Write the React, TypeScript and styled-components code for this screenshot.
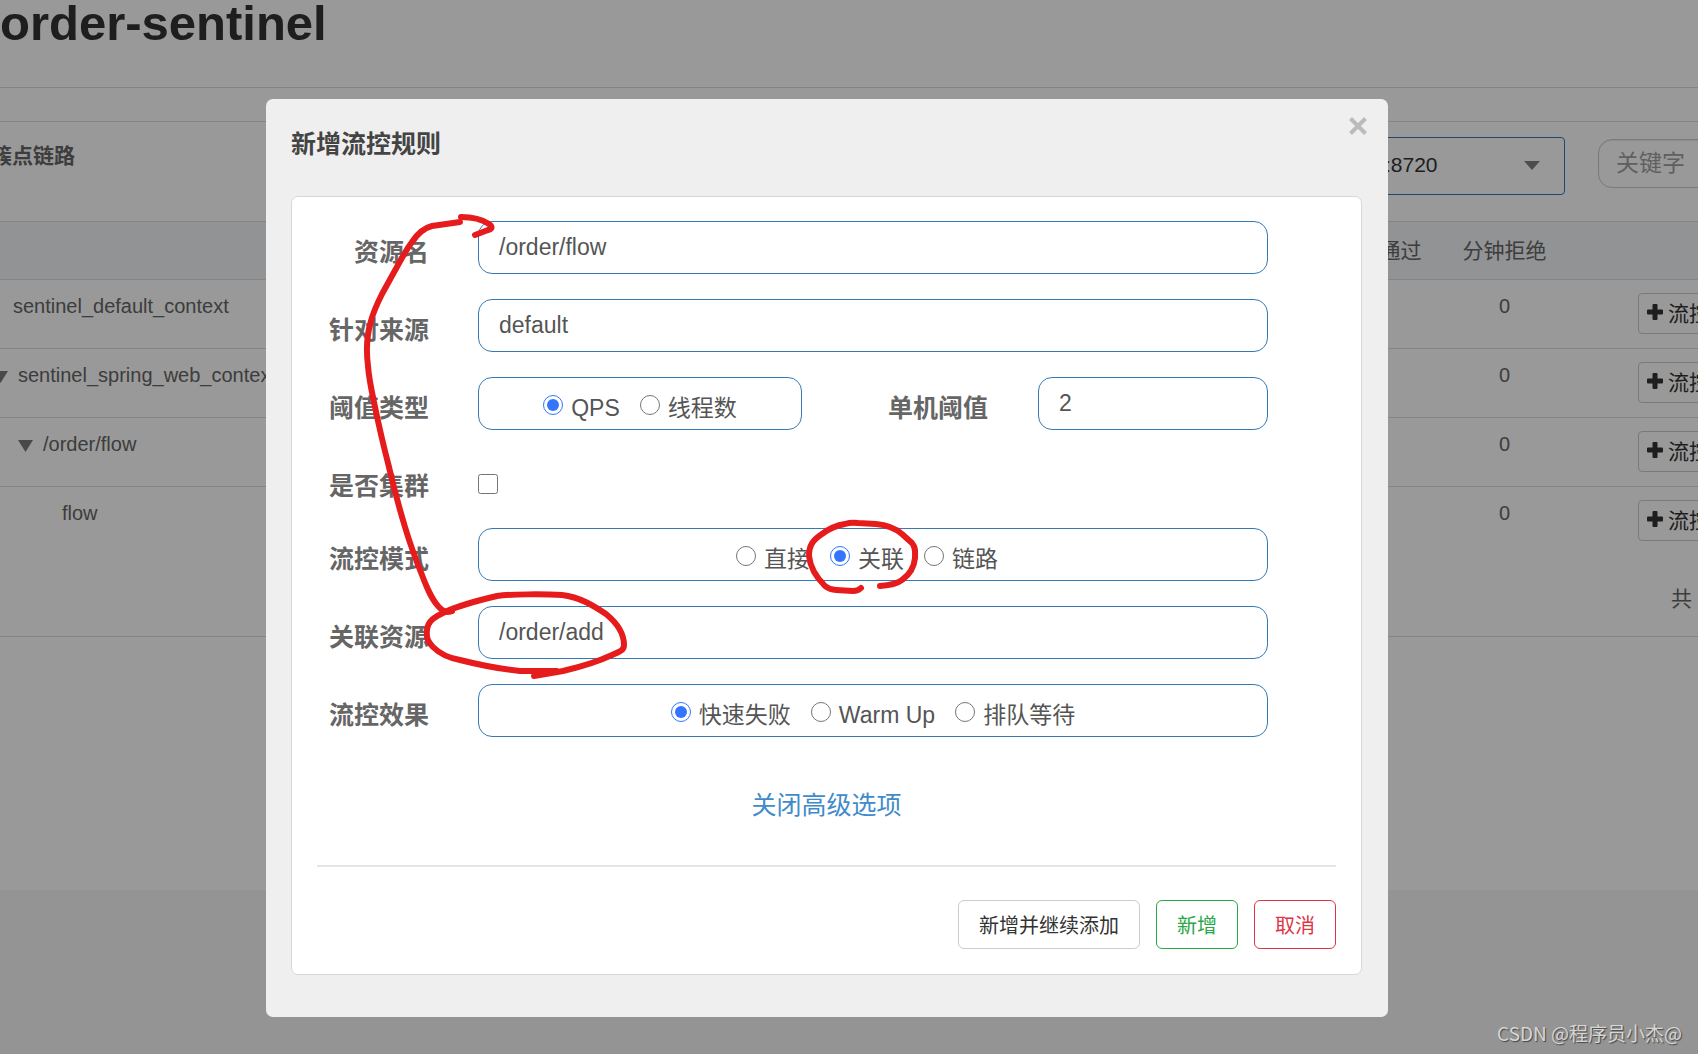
import React, { useState } from "react";
import styled, { createGlobalStyle } from "styled-components";

const SANS = `"Liberation Sans", Arial, "Noto Sans CJK SC", sans-serif`;

const GlobalStyle = createGlobalStyle`
  *, *::before, *::after { box-sizing: border-box; }
  body { margin: 0; background: #f7f7f7; font-family: ${SANS}; }
  button, input, select { font-family: inherit; margin: 0; }
`;

const Screen = styled.div`
  position: relative;
  min-height: 100vh;
  overflow: hidden;
`;

/* ---------- dashboard behind the dialog ---------- */

const Page = styled.main`
  margin: 0 -160px 0 -24px;
  padding-bottom: 253px;
  background: #fff;
  color: #666;
  font-size: 20px;
`;

const PageHeader = styled.header`
  height: 88px;
  padding-left: 24px;
  border-bottom: 1px solid #ddd;
`;

const PageTitle = styled.h1`
  margin: 0;
  color: #333;
  font-size: 49px;
  line-height: 46px;
`;

const Panel = styled.section`
  margin-top: 33px;
  border-top: 1px solid #ddd;
  border-bottom: 1px solid #ddd;
`;

const Toolbar = styled.div`
  display: flex;
  height: 99px;
  padding: 15px 20px 0 15px;
`;

const ToolbarTitle = styled.h2`
  flex: 1;
  margin: 0;
  font-size: 21px;
  line-height: 38px;
`;

const SelectWrap = styled.div`
  position: relative;
  width: 205px;
  height: 58px;
  margin-right: 33px;
`;

const MachineSelect = styled.select`
  appearance: none;
  width: 100%;
  height: 100%;
  padding: 0 24px 4px;
  border: 1px solid #337ab7;
  border-radius: 4px;
  background: #fff;
  color: #333;
  font-size: 21px;
`;

const SelectArrow = styled.svg`
  position: absolute;
  top: 24px;
  right: 25px;
  pointer-events: none;
`;

const KeywordInput = styled.input`
  width: 240px;
  height: 49px;
  margin-top: 2px;
  padding: 0 17px;
  border: 1px solid #ccc;
  border-radius: 14px;
  background: #fff;
  box-shadow: inset 0 1px 1px rgba(0, 0, 0, 0.08);
  font-size: 23px;
  &::placeholder { color: #a0a0a0; }
`;

const Table = styled.table`
  width: 100%;
  table-layout: fixed;
  border-spacing: 0;
`;

const Col = styled.col<{ $width?: number }>`
  width: ${(p) => (p.$width ? `${p.$width}px` : "auto")};
`;

const HeadCell = styled.th`
  height: 58px;
  padding: 0 0 4px;
  border-top: 1px solid #ddd;
  background: #f3f5f7;
  font-size: 21px;
  font-weight: 400;
`;

const Cell = styled.td<{ $center?: boolean }>`
  height: 69px;
  padding: 13px 0 0;
  border-top: 1px solid #ddd;
  line-height: 26px;
  vertical-align: top;
  text-align: ${(p) => (p.$center ? "center" : "left")};
`;

const ActionCell = styled(Cell)`
  padding-left: 71px;
`;

const NodeName = styled.div<{ $indent: number }>`
  display: flex;
  align-items: center;
  gap: 10px;
  padding-left: ${(p) => p.$indent}px;
`;

const CaretIcon = styled.svg`
  margin-top: 4px;
`;

const FlowButton = styled.button`
  display: flex;
  align-items: center;
  gap: 5px;
  height: 41px;
  padding: 0 8px 4px;
  border: 1px solid #ccc;
  border-radius: 4px;
  background: #fff;
  color: #333;
  font-size: 21px;
`;

const Footer = styled.footer`
  display: flex;
  justify-content: flex-end;
  height: 81px;
  padding-top: 29px;
  font-size: 21px;
  line-height: 30px;
`;

const Total = styled.span`
  width: 187px;
`;

/* ---------- dialog ---------- */

const Backdrop = styled.div`
  position: absolute;
  inset: 0;
  padding: 99px 310px 37px 266px;
  background: rgba(0, 0, 0, 0.4);
`;

const Dialog = styled.section`
  position: relative;
  padding: 28px 26px 42px 25px;
  border-radius: 7px;
  background: #efefef;
  color: #555;
`;

const DialogTitle = styled.h4`
  margin: 0 0 34px;
  color: #444;
  font-size: 25px;
  line-height: 35px;
`;

const CloseButton = styled.button`
  position: absolute;
  top: 17px;
  right: 20px;
  display: flex;
  padding: 0;
  border: 0;
  background: none;
`;

const Card = styled.form`
  padding: 24px 25px 25px;
  border: 1px solid #d8d8d8;
  border-radius: 7px;
  background: #fff;
`;

const Fields = styled.div`
  display: grid;
  gap: 25px;
  padding-right: 68px;
`;

const Field = styled.div<{ $short?: boolean }>`
  display: grid;
  grid-template-columns: 112px 1fr;
  column-gap: 49px;
  height: ${(p) => (p.$short ? 48 : 53)}px;
`;

const Label = styled.label`
  padding-top: 14px;
  color: #666;
  font-size: 25px;
  font-weight: 700;
  line-height: 34px;
  text-align: right;
  white-space: nowrap;
`;

const TextInput = styled.input`
  width: 100%;
  height: 53px;
  padding: 0 20px;
  border: 1px solid #337ab7;
  border-radius: 14px;
  background: #fff;
  color: #555;
  font-size: 23px;
`;

const Split = styled.div`
  display: grid;
  grid-template-columns: 41% 1fr 230px;
`;

const SplitLabel = styled(Label)`
  padding-right: 50px;
`;

const RadioBox = styled.div<{ $trail?: boolean }>`
  display: flex;
  justify-content: center;
  gap: 20px;
  height: 53px;
  padding: 13px ${(p) => (p.$trail ? 12 : 0)}px 0 0;
  border: 1px solid #337ab7;
  border-radius: 14px;
`;

const Option = styled.label`
  display: flex;
  align-items: flex-start;
  gap: 8px;
  font-size: 23px;
  line-height: 34px;
  white-space: nowrap;
`;

const Radio = styled.input`
  width: 20px;
  height: 20px;
  margin-top: 4px;
  accent-color: #3375ff;
`;

const Checkbox = styled.input`
  width: 20px;
  height: 20px;
  margin-top: 19px;
`;

const Advanced = styled.div`
  margin-top: 50px;
  text-align: center;
`;

const AdvancedLink = styled.a`
  display: inline-block;
  color: #428bca;
  font-size: 25px;
  line-height: 36px;
  text-decoration: none;
`;

const Divider = styled.hr`
  height: 2px;
  margin: 42px 0 33px;
  border: 0;
  background: #e5e5e5;
`;

const Actions = styled.div`
  display: flex;
  justify-content: flex-end;
  gap: 16px;
`;

const ActionButton = styled.button<{ $color: string; $border: string }>`
  height: 49px;
  padding: 0 20px;
  border: 1px solid ${(p) => p.$border};
  border-radius: 6px;
  background: #fff;
  color: ${(p) => p.$color};
  font-size: 20px;
`;

const Ink = styled.svg`
  position: absolute;
  top: 0;
  left: 0;
  width: 1122px;
  height: 918px;
  pointer-events: none;
`;

const Watermark = styled.div`
  position: absolute;
  right: 16px;
  bottom: 7px;
  color: #d6d6d6;
  font-family: "Noto Sans CJK SC", sans-serif;
  font-size: 19px;
  line-height: 28px;
  text-shadow: 1px 1px 1px #444;
`;

type Node = { name: string; indent: number; open?: boolean };

const nodes: Node[] = [
  { name: "sentinel_default_context", indent: 37 },
  { name: "sentinel_spring_web_context", indent: 17, open: true },
  { name: "/order/flow", indent: 42, open: true },
  { name: "flow", indent: 86 },
];

function Caret() {
  return (
    <CaretIcon width="15" height="12" viewBox="0 0 15 12" aria-hidden="true">
      <path d="M0 0H15L7.5 12Z" fill="#7a7a7a" />
    </CaretIcon>
  );
}

function PlusIcon() {
  return (
    <svg width="16" height="16" viewBox="0 0 16 16" aria-hidden="true">
      <path
        d="M6.500 0H9.500Q10.500 0 10.500 1V5.500H15Q16 5.500 16 6.500V9.500Q16 10.500 15 10.500H10.500V15Q10.500 16 9.500 16H6.500Q5.500 16 5.500 15V10.500H1Q0 10.500 0 9.500V6.500Q0 5.500 1 5.500H5.500V1Q5.500 0 6.500 0Z"
        fill="#333"
      />
    </svg>
  );
}

type RadiosProps = { name: string; options: string[]; initial: string; trail?: boolean };

function Radios({ name, options, initial, trail }: RadiosProps) {
  const [value, setValue] = useState(initial);
  return (
    <RadioBox role="radiogroup" aria-labelledby={`${name}-label`} $trail={trail}>
      {options.map((option) => (
        <Option key={option}>
          <Radio
            type="radio"
            name={name}
            checked={value === option}
            onChange={() => setValue(option)}
          />
          {option}
        </Option>
      ))}
    </RadioBox>
  );
}

export default function App() {
  return (
    <Screen>
      <GlobalStyle />
      <Page>
        <PageHeader>
          <PageTitle>order-sentinel</PageTitle>
        </PageHeader>
        <Panel>
          <Toolbar>
            <ToolbarTitle>簇点链路</ToolbarTitle>
            <SelectWrap>
              <MachineSelect aria-label="机器">
                <option>:8720</option>
              </MachineSelect>
              <SelectArrow width="16" height="9" viewBox="0 0 16 9" aria-hidden="true">
                <path d="M0 0H16L8 9Z" fill="#808080" />
              </SelectArrow>
            </SelectWrap>
            <KeywordInput placeholder="关键字" aria-label="关键字" />
          </Toolbar>
          <Table>
            <colgroup>
              <Col />
              <Col $width={125} />
              <Col $width={125} />
              <Col $width={291} />
            </colgroup>
            <thead>
              <tr>
                <HeadCell />
                <HeadCell>分钟通过</HeadCell>
                <HeadCell>分钟拒绝</HeadCell>
                <HeadCell />
              </tr>
            </thead>
            <tbody>
              {nodes.map((node) => (
                <tr key={node.name}>
                  <Cell>
                    <NodeName $indent={node.indent}>
                      {node.open && <Caret />}
                      {node.name}
                    </NodeName>
                  </Cell>
                  <Cell />
                  <Cell $center>0</Cell>
                  <ActionCell>
                    <FlowButton type="button">
                      <PlusIcon />
                      流控
                    </FlowButton>
                  </ActionCell>
                </tr>
              ))}
            </tbody>
          </Table>
          <Footer>
            <Total>共 4</Total>
          </Footer>
        </Panel>
      </Page>

      <Backdrop>
        <Dialog role="dialog" aria-labelledby="dialog-title">
          <DialogTitle id="dialog-title">新增流控规则</DialogTitle>
          <CloseButton type="button" aria-label="关闭">
            <svg width="20" height="20" viewBox="0 0 20 20" aria-hidden="true">
              <path d="M2.5 2.5L17.5 17.5M17.5 2.5L2.5 17.5" stroke="#bbb" strokeWidth="4" />
            </svg>
          </CloseButton>
          <Card onSubmit={(e) => e.preventDefault()}>
            <Fields>
              <Field>
                <Label htmlFor="resource">资源名</Label>
                <TextInput id="resource" defaultValue="/order/flow" />
              </Field>
              <Field>
                <Label htmlFor="origin">针对来源</Label>
                <TextInput id="origin" defaultValue="default" />
              </Field>
              <Field>
                <Label as="span" id="grade-label">阈值类型</Label>
                <Split>
                  <Radios name="grade" options={["QPS", "线程数"]} initial="QPS" />
                  <SplitLabel htmlFor="count">单机阈值</SplitLabel>
                  <TextInput id="count" defaultValue="2" />
                </Split>
              </Field>
              <Field $short>
                <Label htmlFor="cluster">是否集群</Label>
                <Checkbox id="cluster" type="checkbox" />
              </Field>
              <Field>
                <Label as="span" id="strategy-label">流控模式</Label>
                <Radios name="strategy" options={["直接", "关联", "链路"]} initial="关联" trail />
              </Field>
              <Field>
                <Label htmlFor="ref">关联资源</Label>
                <TextInput id="ref" defaultValue="/order/add" />
              </Field>
              <Field>
                <Label as="span" id="behavior-label">流控效果</Label>
                <Radios name="behavior" options={["快速失败", "Warm Up", "排队等待"]} initial="快速失败" />
              </Field>
            </Fields>
            <Advanced>
              <AdvancedLink href="#">关闭高级选项</AdvancedLink>
            </Advanced>
            <Divider />
            <Actions>
              <ActionButton type="button" $color="#333" $border="#ccc">新增并继续添加</ActionButton>
              <ActionButton type="submit" $color="#28a745" $border="#28a745">新增</ActionButton>
              <ActionButton type="button" $color="#dc3545" $border="#dc3545">取消</ActionButton>
            </Actions>
          </Card>
          <Ink viewBox="266 99 1122 918" aria-hidden="true">
            <g fill="none" stroke="#e61c1c" strokeWidth="6" strokeLinecap="round" strokeLinejoin="round">
              <path d="M461 217C474 217 483 220 489 224C493 227 492 229 488 230L475 235" />
              <path d="M460 222L432 226C424 228 418 233 412 242C406 250 402 258 398 265L382 294C376 306 373 313 371 321C367 334 366 350 368 366C369 380 372 392 375 407C379 426 383 444 388 463C393 485 399 507 405 527C410 544 416 560 422 575C428 591 433 602 441 609Q445 613 452 611" />
              <path d="M452 611L445 612C434 617 428 621 427 630C426 638 428 642 433 647C441 655 449 658 460 660C480 665 500 669 520 671H556" />
              <path d="M445 612C458 606 484 599 497 596C510 594 545 594 562 595C580 597 594 606 606 614C617 623 624 634 624 645C624 650 621 651 612 655C595 663 580 667 563 671L534 676L556 671" />
              <path d="M861 588Q858 591 853 591L836 590Q830 590 825 586C816 577 810 566 809 556C809 545 813 540 822 534C830 528 838 525 845 524Q851 522 858 523L876 524C888 525 895 528 902 534L912 543C916 548 915 552 915 558C914 569 909 575 902 580C897 584 891 585 880 586" />
            </g>
          </Ink>
        </Dialog>
      </Backdrop>
      <Watermark>CSDN @程序员小杰@</Watermark>
    </Screen>
  );
}
